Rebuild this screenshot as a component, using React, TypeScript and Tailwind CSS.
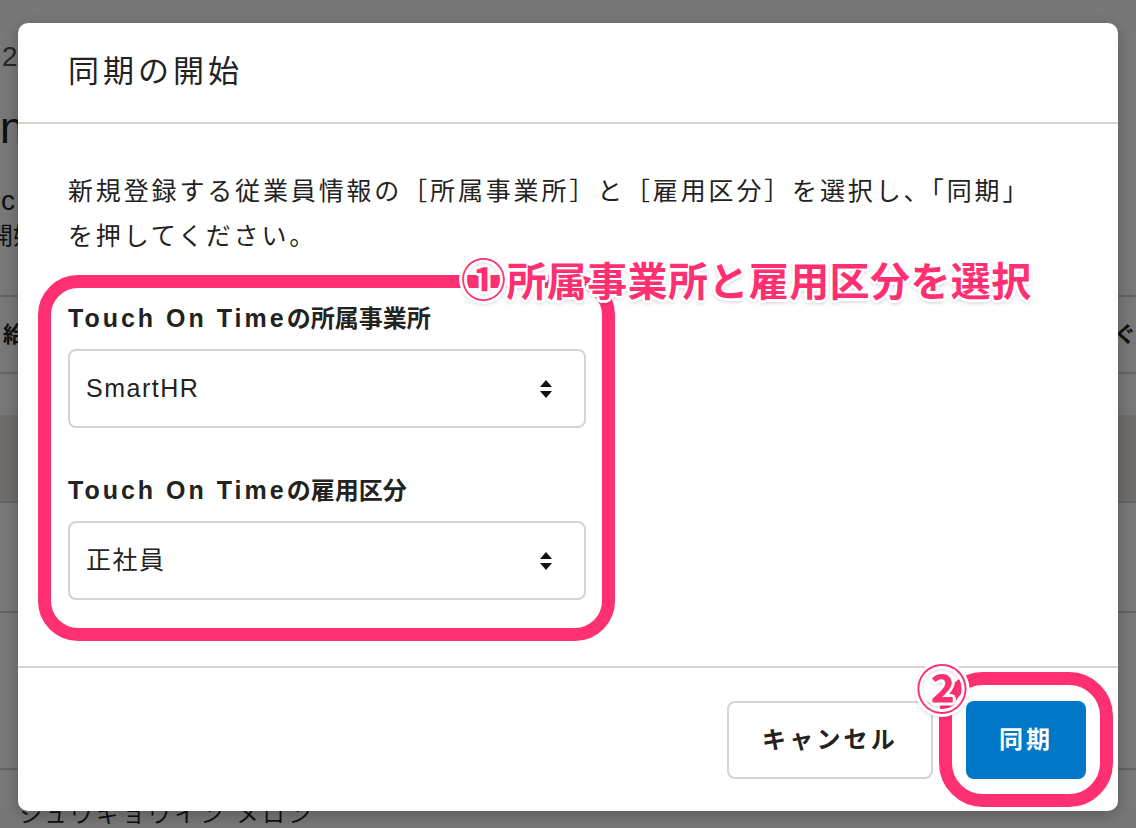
import { type ReactNode } from 'react';

const jp = "font-['Liberation_Sans','Noto_Sans_CJK_JP',sans-serif]";
const outline =
  '[text-shadow:3px_0_0_#fff,-3px_0_0_#fff,0_3px_0_#fff,0_-3px_0_#fff,2px_2px_0_#fff,-2px_-2px_0_#fff,2px_-2px_0_#fff,-2px_2px_0_#fff,0_2px_5px_rgba(0,0,0,0.45)]';

function SelectArrows() {
  return (
    <svg width="12" height="18" viewBox="0 0 12 18" className="shrink-0">
      <path d="M6 0 L12 7 L0 7 Z" fill="#111" />
      <path d="M0 11 L12 11 L6 18 Z" fill="#111" />
    </svg>
  );
}

function Field({ label, suffix, value }: { label: string; suffix: string; value: ReactNode }) {
  return (
    <div>
      <p className="h-[32px] text-[25px] font-bold leading-[32px] text-[#23221e]">
        <span className="tracking-[3px]">{label}</span>
        <span className="text-[24px]">{suffix}</span>
      </p>
      <div className="mt-[15px] flex h-[79px] w-[518px] items-center justify-between rounded-[8px] border-2 border-[#d6d3d0] bg-white pl-[16px] pr-[32px]">
        <span className="text-[25px] tracking-[1.5px] text-[#23221e]">{value}</span>
        <SelectArrows />
      </div>
    </div>
  );
}

export default function App() {
  return (
    <div className={`relative h-[828px] w-full overflow-hidden bg-white ${jp}`}>
      {/* page behind the dialog */}
      <div className="flex flex-col text-[#23221e]">
        <p className="pl-[2px] pt-[42px] text-[28px] leading-[30px] text-[#555]">2</p>
        <p className="mt-[31px] text-[44px] leading-[50px]">n</p>
        <p className="mt-[33px] pl-[1px] text-[28px] leading-[30px]">c</p>
        <p className="-ml-[11px] mt-[5px] text-[24px] leading-[30px]">開始</p>
        <div className="mt-[44px] flex h-[79px] items-center justify-between border-y-2 border-[#d6d3d0] pl-[3px] text-[22px] font-bold">
          <span>給与</span>
          <span>|ぐ</span>
        </div>
        <div className="h-[41px]" />
        <div className="h-[88px] border-b-2 border-[#d6d3d0] bg-[#ece8e3]" />
        <div className="h-[110px] border-b-2 border-[#d6d3d0]" />
        <div className="h-[157px] border-b-2 border-[#d6d3d0]" />
        <p className="mt-[32px] pl-[20px] text-[22px] leading-[26px] tracking-[4px]">ジュウギョウイン メロン</p>
        <p className="pl-[215px] text-[20px] leading-[24px] tracking-[6px]">ー は 2022/04/01</p>
      </div>

      <div className="absolute inset-0 bg-black/[0.53]" />

      {/* dialog */}
      <div className="absolute left-[18px] top-[23px] w-[1100px] rounded-[10px] bg-white shadow-[0_4px_16px_rgba(0,0,0,0.25)]">
        <div className="flex h-[101px] items-center border-b-2 border-[#d6d3d0] px-[50px]">
          <h1 className="pb-[2px] text-[31px] leading-[40px] tracking-[4px] text-[#23221e]">同期の開始</h1>
        </div>

        <div className="px-[50px] pb-[66px] pt-[45px]">
          <p className="max-w-[985px] text-[25px] leading-[45px] tracking-[2.85px] text-[#23221e]">
            新規登録する従業員情報の［所属事業所］と［雇用区分］を選択し、「同期」を押してください。
          </p>
          <div className="mt-[43px] flex flex-col gap-[46px]">
            <Field label="Touch On Time" suffix="の所属事業所" value="SmartHR" />
            <Field label="Touch On Time" suffix="の雇用区分" value="正社員" />
          </div>
        </div>

        <div className="flex items-center justify-end gap-[33px] border-t-2 border-[#d6d3d0] pb-[32px] pl-[50px] pr-[32px] pt-[33px]">
          <button
            type="button"
            className="flex h-[78px] w-[206px] items-center justify-center rounded-[8px] border-2 border-[#d6d3d0] bg-white text-[24px] font-bold tracking-[3.2px] text-[#23221e]"
          >
            キャンセル
          </button>
          <button
            type="button"
            className="flex h-[78px] w-[120px] items-center justify-center rounded-[8px] bg-[#0077c7] text-[24px] font-bold tracking-[3px] text-white"
          >
            同期
          </button>
        </div>

        {/* annotations */}
        <div className="pointer-events-none absolute left-[20px] top-[252px] h-[366px] w-[577px] rounded-[40px] border-[13px] border-[#ff3071]" />
        <p
          className={`absolute left-[443px] top-[238px] flex items-center whitespace-nowrap text-[40px] font-bold leading-[42px] tracking-[0.4px] text-[#ff3071] ${outline}`}
        >
          <span className="text-[45px] leading-[42px]">①</span>
          <span>所属事業所と雇用区分を選択</span>
        </p>
        <div className="pointer-events-none absolute left-[921px] top-[649px] h-[135px] w-[174px] rounded-[44px] border-[13px] border-[#ff3071]" />
        <span
          className={`absolute left-[898px] top-[642px] flex h-[52px] w-[52px] items-center justify-center text-[52px] font-bold leading-none text-[#ff3071] ${outline}`}
        >
          ②
        </span>
      </div>
    </div>
  );
}
